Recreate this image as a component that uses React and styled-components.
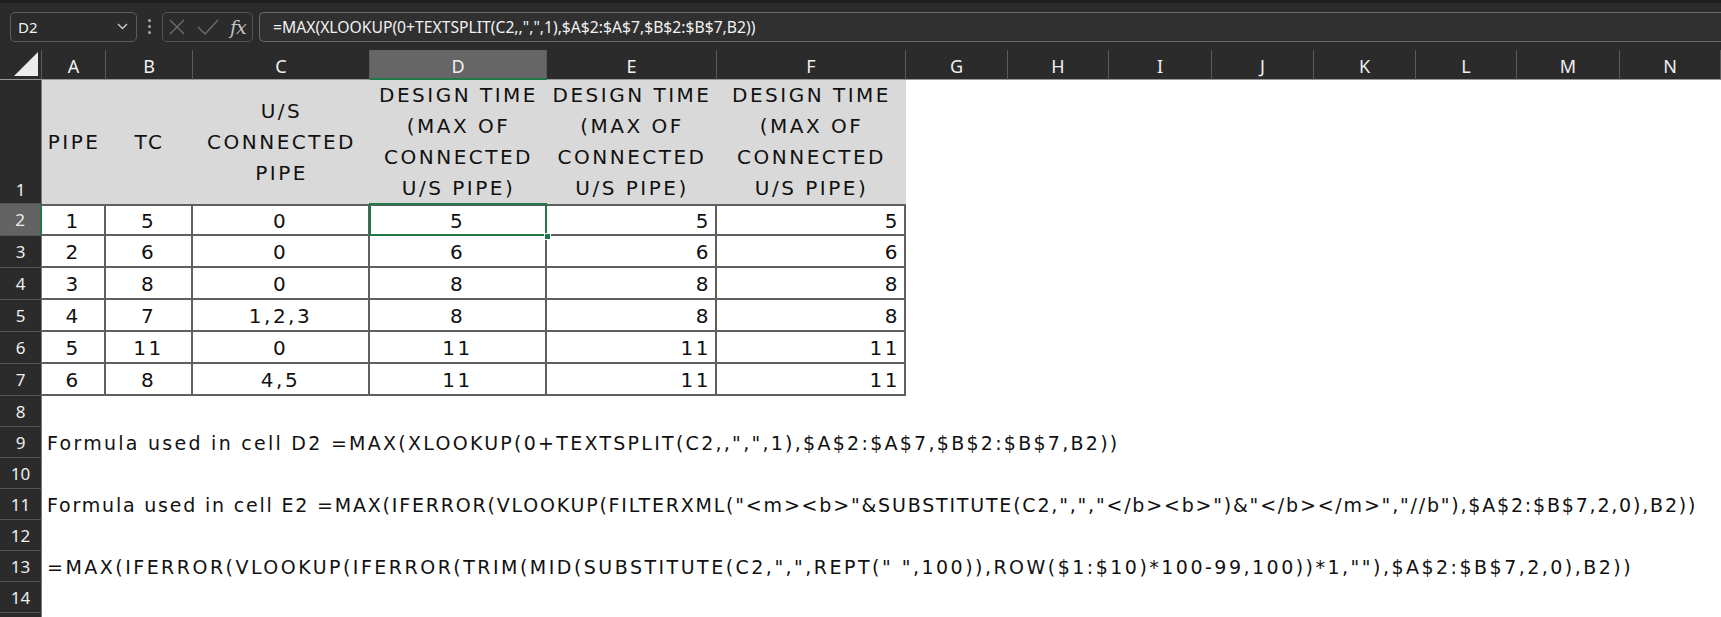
import React from "react";
import styled, { createGlobalStyle, css } from "styled-components";

const GlobalStyle = createGlobalStyle`
  html, body { margin: 0; padding: 0; background: #ffffff; }
  body { width: 1721px; height: 617px; overflow: hidden; font-family: "Noto Sans", "Open Sans", sans-serif; }
`;

const CELL_FONT = `"DejaVu Sans", "Liberation Sans", sans-serif`;
const UI_FONT = `"Noto Sans", "Open Sans", sans-serif`;

const COLS = [
  { k: "A", w: 64 }, { k: "B", w: 87 }, { k: "C", w: 177 }, { k: "D", w: 177 },
  { k: "E", w: 170 }, { k: "F", w: 189 }, { k: "G", w: 102 }, { k: "H", w: 101 },
  { k: "I", w: 103 }, { k: "J", w: 102 }, { k: "K", w: 102 }, { k: "L", w: 101 },
  { k: "M", w: 103 }, { k: "N", w: 101 },
];

const HEADERS = [
  ["PIPE"],
  ["TC"],
  ["U/S", "CONNECTED", "PIPE"],
  ["DESIGN TIME", "(MAX OF", "CONNECTED", "U/S PIPE)"],
  ["DESIGN TIME", "(MAX OF", "CONNECTED", "U/S PIPE)"],
  ["DESIGN TIME", "(MAX OF", "CONNECTED", "U/S PIPE)"],
];

const DATA = [
  ["1", "5", "0", "5", "5", "5"],
  ["2", "6", "0", "6", "6", "6"],
  ["3", "8", "0", "8", "8", "8"],
  ["4", "7", "1,2,3", "8", "8", "8"],
  ["5", "11", "0", "11", "11", "11"],
  ["6", "8", "4,5", "11", "11", "11"],
];

const ALIGN = ["center", "center", "center", "center", "right", "right"];

const NOTES = {
  9: {
    text: `Formula used in cell D2 =MAX(XLOOKUP(0+TEXTSPLIT(C2,,",",1),$A$2:$A$7,$B$2:$B$7,B2))`,
    track: 2.27,
  },
  11: {
    text: `Formula used in cell E2 =MAX(IFERROR(VLOOKUP(FILTERXML("<m><b>"&SUBSTITUTE(C2,",","</b><b>")&"</b></m>","//b"),$A$2:$B$7,2,0),B2))`,
    track: 1.8,
  },
  13: {
    text: `=MAX(IFERROR(VLOOKUP(IFERROR(TRIM(MID(SUBSTITUTE(C2,",",REPT(" ",100)),ROW($1:$10)*100-99,100))*1,""),$A$2:$B$7,2,0),B2))`,
    track: 2.48,
  },
};

/* ---------- formula bar ---------- */
const Page = styled.div`
  width: 1721px;
  height: 617px;
  overflow: hidden;
  display: flex;
  flex-direction: column;
`;

const Toolbar = styled.div`
  height: 50px;
  flex: none;
  box-sizing: border-box;
  background: #2b2b2b;
  border-top: 3px solid #1f1f1f;
  display: flex;
  align-items: center;
  padding-left: 10px;
`;

const NameBox = styled.div`
  width: 127px;
  height: 30px;
  box-sizing: border-box;
  border: 1px solid #5d5d5d;
  border-radius: 5px;
  display: flex;
  align-items: center;
  justify-content: space-between;
  padding: 0 8px 0 7px;
  color: #f2f2f2;
  font: 15px ${UI_FONT};
`;

const Dots = styled.div`
  width: 25px;
  display: flex;
  flex-direction: column;
  align-items: center;
  gap: 3px;
  & > i {
    width: 3px;
    height: 3px;
    border-radius: 50%;
    background: #a8a8a8;
  }
`;

const ButtonGroup = styled.div`
  width: 91px;
  height: 30px;
  box-sizing: border-box;
  border: 1px solid #555555;
  border-radius: 5px;
  display: flex;
  align-items: center;
  padding: 0 5px 0 6px;
  gap: 12px;
  margin-right: 6px;
`;

const Fx = styled.span`
  font: italic 19px "DejaVu Serif", "Liberation Serif", serif;
  color: #c4c4c4;
  letter-spacing: -1px;
  margin-left: -1px;
`;

const FormulaInput = styled.div`
  flex: 1;
  height: 30px;
  box-sizing: border-box;
  border: 1px solid #6a6a6a;
  border-right: none;
  border-radius: 5px 0 0 5px;
  background: #303030;
  display: flex;
  align-items: center;
  padding-left: 13px;
  color: #f2f2f2;
  font: 15.7px ${UI_FONT};
  white-space: nowrap;
`;

/* ---------- sheet ---------- */
const Sheet = styled.div`
  flex: 1;
  display: grid;
  grid-template-columns: 42px ${COLS.map((c) => c.w + "px").join(" ")};
  grid-template-rows: 30px 124px repeat(6, 32px) repeat(8, 31px);
  background: #ffffff;
`;

const Corner = styled.div`
  background: #2b2b2b;
  border-bottom: 1px solid #9a9a9a;
  border-right: 1px solid #5a5a5a;
  box-sizing: border-box;
  display: flex;
  align-items: flex-end;
  justify-content: flex-end;
  padding: 0 3px 3px 0;
`;

const ColHead = styled.div`
  box-sizing: border-box;
  background: ${(p) => (p.$active ? "#666666" : "#2b2b2b")};
  border-right: 1px solid #5a5a5a;
  border-bottom: ${(p) => (p.$active ? "2px solid #1f7a47" : "1px solid #9a9a9a")};
  color: #f0f0f0;
  font: 18px ${UI_FONT};
  display: flex;
  align-items: center;
  justify-content: center;
  padding-top: 3px;
`;

const RowHead = styled.div`
  box-sizing: border-box;
  background: ${(p) => (p.$active ? "#636363" : "#2b2b2b")};
  border-bottom: 1px solid #555555;
  border-right: ${(p) => (p.$active ? "2px solid #1f7a47" : "1px solid #7a7a7a")};
  color: #eeeeee;
  font: 17px ${UI_FONT};
  display: flex;
  justify-content: center;
  align-items: ${(p) => (p.$bottom ? "flex-end" : "center")};
  padding-bottom: ${(p) => (p.$bottom ? "2px" : "0")};
`;

const TitleCell = styled.div`
  background: #d9d9d9;
  color: #111111;
  font: 20px ${CELL_FONT};
  letter-spacing: 2.5px;
  line-height: 31px;
  display: flex;
  flex-direction: column;
  align-items: center;
  justify-content: center;
  text-align: center;
  white-space: nowrap;
  & > span { display: block; }
`;

const Blank = styled.div`
  grid-column: span ${(p) => p.$span || 1};
  background: #ffffff;
`;

const DataCell = styled.div`
  position: relative;
  box-sizing: border-box;
  background: #ffffff;
  color: #111111;
  font: 20px ${CELL_FONT};
  letter-spacing: 2.5px;
  display: flex;
  align-items: center;
  justify-content: ${(p) => (p.$align === "right" ? "flex-end" : "center")};
  padding: 2px ${(p) => (p.$align === "right" ? "4px" : "0")} 0 0;
  border-right: 2px solid #5f5f5f;
  border-bottom: 2px solid #5f5f5f;
  ${(p) => p.$top && css`border-top: 2px solid #5f5f5f;`}
  ${(p) =>
    p.$selected &&
    css`
      z-index: 2;
      &::after {
        content: "";
        position: absolute;
        left: -1px;
        top: -3px;
        right: -2px;
        bottom: -2px;
        border: 2px solid #1f7a47;
        pointer-events: none;
      }
      &::before {
        content: "";
        position: absolute;
        right: -6px;
        bottom: -6px;
        width: 5px;
        height: 5px;
        background: #1f7a47;
        border: 1px solid #ffffff;
        z-index: 3;
      }
    `}
`;

const NoteCell = styled.div`
  grid-column: span 14;
  background: #ffffff;
  color: #111111;
  font: 19px ${CELL_FONT};
  letter-spacing: ${(p) => p.$track}px;
  white-space: pre;
  display: flex;
  align-items: center;
  padding: 1px 0 0 5px;
  overflow: visible;
`;

const Chevron = () => (
  <svg width="11" height="7" viewBox="0 0 11 7">
    <polyline points="1,1 5.5,5.5 10,1" fill="none" stroke="#cfcfcf" strokeWidth="1.3" />
  </svg>
);

const CrossIcon = () => (
  <svg width="16" height="16" viewBox="0 0 16 16">
    <path d="M1 1 L15 15 M15 1 L1 15" stroke="#6e6e6e" strokeWidth="1.4" fill="none" />
  </svg>
);

const CheckIcon = () => (
  <svg width="22" height="16" viewBox="0 0 22 16">
    <polyline points="1,8 8,15 21,1" stroke="#6e6e6e" strokeWidth="1.4" fill="none" />
  </svg>
);

const CornerTriangle = () => (
  <svg width="24" height="24" viewBox="0 0 24 24">
    <polygon points="24,0 24,24 0,24" fill="#ececec" />
  </svg>
);

export default function App() {
  const rows = [];

  rows.push(
    <RowHead key="rh1" $bottom>1</RowHead>,
    ...HEADERS.map((lines, i) => (
      <TitleCell key={"t" + i}>
        {lines.map((l, j) => (
          <span key={j}>{l}</span>
        ))}
      </TitleCell>
    )),
    <Blank key="b1" $span={8} />
  );

  DATA.forEach((r, ri) => {
    const n = ri + 2;
    rows.push(<RowHead key={"rh" + n} $active={n === 2}>{n}</RowHead>);
    r.forEach((v, ci) => {
      rows.push(
        <DataCell
          key={`d${n}-${ci}`}
          $align={ALIGN[ci]}
          $top={n === 2}
          $selected={n === 2 && ci === 3}
        >
          {v}
        </DataCell>
      );
    });
    rows.push(<Blank key={"b" + n} $span={8} />);
  });

  for (let n = 8; n <= 15; n++) {
    rows.push(<RowHead key={"rh" + n}>{n < 15 ? n : ""}</RowHead>);
    const note = NOTES[n];
    rows.push(
      note ? (
        <NoteCell key={"n" + n} $track={note.track}>
          {note.text}
        </NoteCell>
      ) : (
        <Blank key={"n" + n} $span={14} />
      )
    );
  }

  return (
    <>
      <GlobalStyle />
      <Page>
        <Toolbar>
          <NameBox>
            <span>D2</span>
            <Chevron />
          </NameBox>
          <Dots>
            <i />
            <i />
            <i />
          </Dots>
          <ButtonGroup>
            <CrossIcon />
            <CheckIcon />
            <Fx>fx</Fx>
          </ButtonGroup>
          <FormulaInput>{`=MAX(XLOOKUP(0+TEXTSPLIT(C2,,",",1),$A$2:$A$7,$B$2:$B$7,B2))`}</FormulaInput>
        </Toolbar>
        <Sheet>
          <Corner>
            <CornerTriangle />
          </Corner>
          {COLS.map((c) => (
            <ColHead key={c.k} $active={c.k === "D"}>
              {c.k}
            </ColHead>
          ))}
          {rows}
        </Sheet>
      </Page>
    </>
  );
}
